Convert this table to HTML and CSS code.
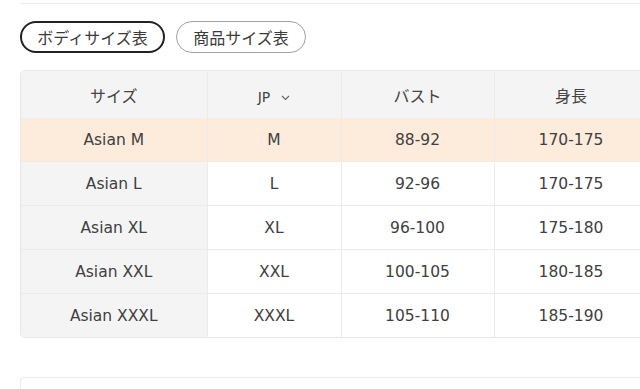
FILE: index.html
```html
<!DOCTYPE html>
<html lang="ja">
<head>
<meta charset="utf-8">
<link rel="stylesheet" href="styles.css">
</head>
<body>
<div class="page">
  <div class="prev-box"></div>
  <div class="tabs">
    <button class="tab active">ボディサイズ表</button>
    <button class="tab">商品サイズ表</button>
  </div>
  <div class="table-wrap">
    <table class="size-table">
      <colgroup>
        <col class="c1"><col class="c2"><col class="c3"><col class="c4"><col class="c5">
      </colgroup>
      <thead>
        <tr>
          <th class="first">サイズ</th>
          <th><span class="jp">JP</span><svg class="chev" width="9" height="6" viewBox="0 0 9 6"><path d="M1 1 L4.5 4.5 L8 1" fill="none" stroke="#666" stroke-width="1.2"/></svg></th>
          <th>バスト</th>
          <th>身長</th>
          <th></th>
        </tr>
      </thead>
      <tbody>
        <tr class="hl"><td class="first">Asian M</td><td>M</td><td>88-92</td><td>170-175</td><td></td></tr>
        <tr><td class="first">Asian L</td><td>L</td><td>92-96</td><td>170-175</td><td></td></tr>
        <tr><td class="first">Asian XL</td><td>XL</td><td>96-100</td><td>175-180</td><td></td></tr>
        <tr><td class="first">Asian XXL</td><td>XXL</td><td>100-105</td><td>180-185</td><td></td></tr>
        <tr><td class="first">Asian XXXL</td><td>XXXL</td><td>105-110</td><td>185-190</td><td></td></tr>
      </tbody>
    </table>
  </div>
  <div class="next-box"></div>
</div>
</body>
</html>
```
FILE: styles.css
```css
html, body {
  margin: 0;
  padding: 0;
  background: #fff;
  overflow: hidden;
}
body {
  font-family: "DejaVu Sans", "Noto Sans CJK JP", sans-serif;
  color: #333;
  width: 640px;
  height: 389px;
}
.page {
  padding-left: 20px;
}
.prev-box {
  height: 3px;
  border-bottom: 1px solid #ececec;
  margin-right: -40px;
}
.tabs {
  display: flex;
  gap: 11px;
  margin-top: 17px;
  height: 32px;
}
.tab {
  box-sizing: border-box;
  height: 32px;
  padding: 0;
  border-radius: 16px;
  background: #fff;
  font-family: "Noto Sans CJK JP", sans-serif;
  font-size: 16px;
  color: #3a3a3a;
  border: 1px solid #a0a0a0;
  width: 130px;
  letter-spacing: 0;
}
.tab.active {
  border: 2px solid #222;
  width: 145px;
}
.table-wrap {
  margin-top: 17px;
  width: 660px;
  border: 1px solid #e6e6e6;
  border-radius: 5px;
  overflow: hidden;
}
.size-table {
  border-collapse: collapse;
  table-layout: fixed;
  width: 800px;
  font-size: 15.5px;
}
col.c1 { width: 186px; }
col.c2 { width: 134px; }
col.c3 { width: 153px; }
col.c4 { width: 154px; }
col.c5 { width: 173px; }
.size-table th,
.size-table td {
  text-align: center;
  vertical-align: middle;
  padding: 0;
  border-left: 1px solid #ebebeb;
  border-top: 1px solid #ebebeb;
}
.size-table th:first-child,
.size-table td:first-child {
  border-left: none;
}
.size-table thead th {
  border-top: none;
  height: 47px;
  background: #f4f4f4;
  font-weight: normal;
  font-family: "Noto Sans CJK JP", sans-serif;
  font-size: 16px;
  color: #444;
}
.size-table tbody td {
  height: 43px;
  background: #fff;
  color: #404040;
}
.size-table tbody td.first {
  background: #f4f4f4;
}
.size-table tbody tr.hl td {
  background: #fdecdc;
  border-top: none;
}
.jp {
  font-size: 14px;
  font-family: "DejaVu Sans", sans-serif;
}
.chev {
  margin-left: 11px;
  vertical-align: 1px;
}
.next-box {
  margin-top: 39px;
  height: 20px;
  border-top: 1px solid #ececec;
  border-left: 1px solid #ececec;
  border-radius: 4px 0 0 0;
}
```
